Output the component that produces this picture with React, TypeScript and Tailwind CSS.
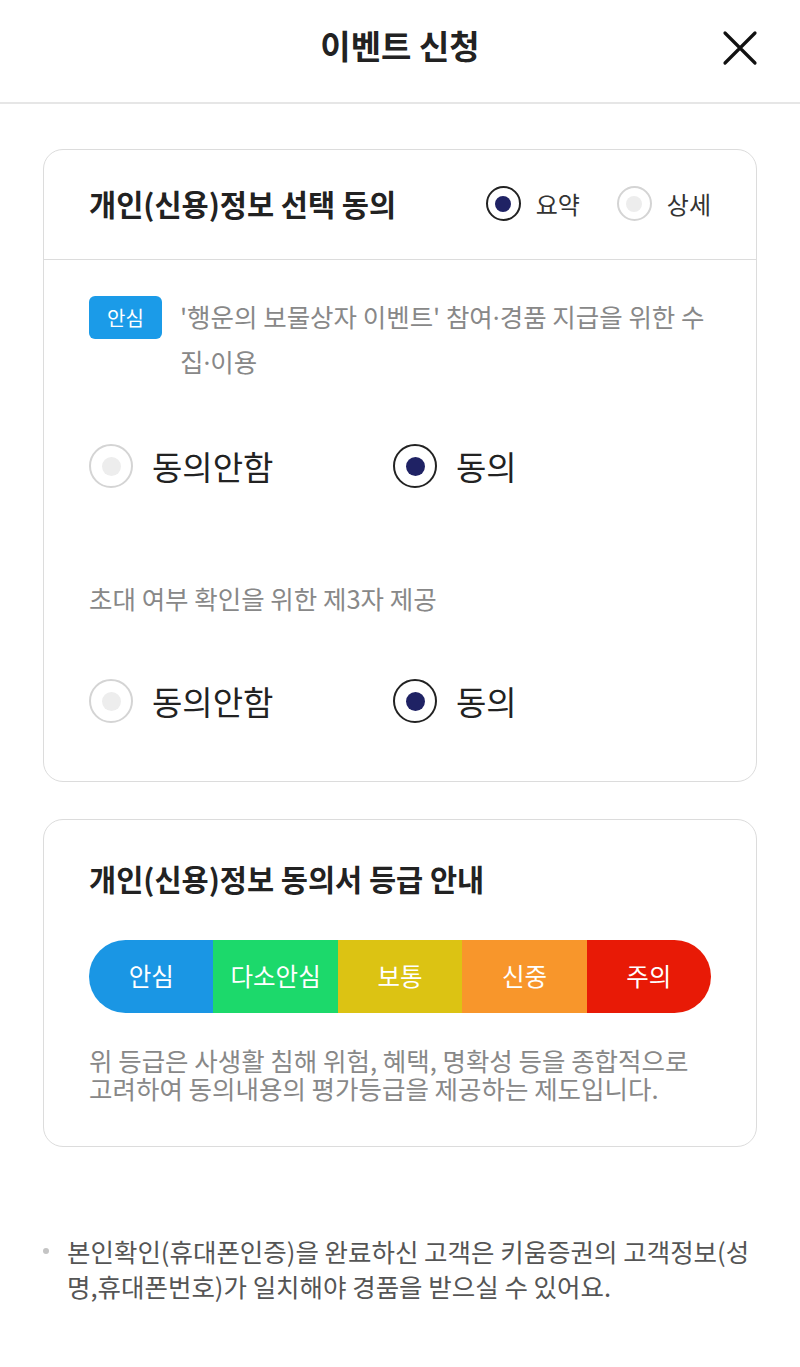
import { useState } from "react";

type RadioProps = {
  checked: boolean;
  size: "sm" | "lg";
};

const Radio = ({ checked, size }: RadioProps) => {
  const box = size === "lg" ? "w-[44px] h-[44px]" : "w-[35px] h-[35px]";
  const dot = size === "lg" ? "w-[19px] h-[19px]" : "w-[16px] h-[16px]";
  return (
    <span
      className={`${box} shrink-0 rounded-full flex items-center justify-center ${
        checked ? "border-2 border-[#222]" : "border-2 border-[#d4d4d4]"
      } bg-white`}
    >
      <span
        className={`${dot} rounded-full ${checked ? "bg-[#1f2264]" : "bg-[#ededed]"}`}
      ></span>
    </span>
  );
};

type AgreeRowProps = {
  value: boolean;
  onChange: (v: boolean) => void;
};

const AgreeRow = ({ value, onChange }: AgreeRowProps) => (
  <div className="flex items-center h-[44px]">
    <button
      onClick={() => onChange(false)}
      className="w-[304px] flex items-center gap-[19px] text-left"
    >
      <Radio checked={!value} size="lg" />
      <span className="text-[33px] text-[#222] leading-none">동의안함</span>
    </button>
    <button onClick={() => onChange(true)} className="flex items-center gap-[19px]">
      <Radio checked={value} size="lg" />
      <span className="text-[33px] text-[#222] leading-none">동의</span>
    </button>
  </div>
);

const Dot = () => <span className="font-['Noto_Sans',sans-serif]">·</span>;

const grades = [
  { label: "안심", color: "bg-[#1a96e4]" },
  { label: "다소안심", color: "bg-[#1cd96b]" },
  { label: "보통", color: "bg-[#dcc313]" },
  { label: "신중", color: "bg-[#f8962b]" },
  { label: "주의", color: "bg-[#e81a06]" },
];

export default function App() {
  const [mode, setMode] = useState<"summary" | "detail">("summary");
  const [collect, setCollect] = useState(true);
  const [thirdParty, setThirdParty] = useState(true);

  return (
    <div className="w-[800px] min-h-[1367px] bg-white font-['Noto_Sans_CJK_KR',sans-serif] text-[#222]">
      {/* Header */}
      <div className="h-[104px] border-b-2 border-[#e6e6e6] flex items-center justify-center relative">
        <h1 className="text-[33px] font-bold text-[#222] -mt-[10px]">이벤트 신청</h1>
        <button className="absolute right-[40px] top-[28px] w-[40px] h-[40px] flex items-center justify-center">
          <svg width="36" height="36" viewBox="0 0 36 36" fill="none">
            <path d="M3 3 L33 33 M33 3 L3 33" stroke="#111" strokeWidth="3.2" strokeLinecap="round" />
          </svg>
        </button>
      </div>

      <div className="px-[43px] pt-[45px]">
        {/* Consent card */}
        <div className="border border-[#dcdcdc] rounded-[20px]">
          <div className="h-[110px] flex items-center justify-between pl-[45px] pr-[45px] border-b border-[#dcdcdc]">
            <h2 className="text-[29.5px] font-bold -mt-[2px]">개인(신용)정보 선택 동의</h2>
            <div className="flex items-center gap-[37px] -mt-[2px]">
              <button onClick={() => setMode("summary")} className="flex items-center gap-[15px]">
                <Radio checked={mode === "summary"} size="sm" />
                <span className="text-[24px] text-[#333]">요약</span>
              </button>
              <button onClick={() => setMode("detail")} className="flex items-center gap-[15px]">
                <Radio checked={mode === "detail"} size="sm" />
                <span className="text-[24px] text-[#333]">상세</span>
              </button>
            </div>
          </div>

          <div className="px-[45px] pt-[35px] pb-[58px]">
            <div className="flex items-start gap-[18px]">
              <span className="shrink-0 w-[73px] h-[43px] rounded-[6px] bg-[#1b9be8] text-white text-[20px] flex items-center justify-center mt-[1px]">
                안심
              </span>
              <p className="text-[25.5px] leading-[44px] text-[#888] w-[533px] -mt-[1px]">
                '행운의 보물상자 이벤트' 참여<Dot />경품 지급을 위한 수집<Dot />이용
              </p>
            </div>

            <div className="mt-[60px]">
              <AgreeRow value={collect} onChange={setCollect} />
            </div>

            <p className="mt-[94px] text-[25.5px] leading-[32px] text-[#888]">
              초대 여부 확인을 위한 제3자 제공
            </p>

            <div className="mt-[65px]">
              <AgreeRow value={thirdParty} onChange={setThirdParty} />
            </div>
          </div>
        </div>

        {/* Grade card */}
        <div className="mt-[37px] border border-[#dcdcdc] rounded-[20px] px-[45px] pt-[40px] pb-[44px]">
          <h2 className="text-[29.5px] font-bold leading-[36px]">
            개인(신용)정보 동의서 등급 안내
          </h2>
          <div className="mt-[44px] h-[73px] rounded-full overflow-hidden flex">
            {grades.map((g) => (
              <div
                key={g.label}
                className={`flex-1 ${g.color} flex items-center justify-center text-white text-[24.5px]`}
              >
                {g.label}
              </div>
            ))}
          </div>
          <p className="mt-[33px] text-[25.5px] leading-[28px] text-[#888]">
            위 등급은 사생활 침해 위험, 혜택, 명확성 등을 종합적으로
            <br />
            고려하여 동의내용의 평가등급을 제공하는 제도입니다.
          </p>
        </div>
      </div>

      {/* Footnote */}
      <div className="mt-[86px] pl-[43px] pr-[50px] flex items-start gap-[18px]">
        <span className="shrink-0 w-[6px] h-[6px] rounded-full bg-[#c4c4c4] mt-[15px]"></span>
        <p className="text-[25.5px] leading-[35px] text-[#555]">
          본인확인(휴대폰인증)을 완료하신 고객은 키움증권의 고객정보(성명,휴대폰번호)가 일치해야 경품을 받으실 수 있어요.
        </p>
      </div>
    </div>
  );
}
